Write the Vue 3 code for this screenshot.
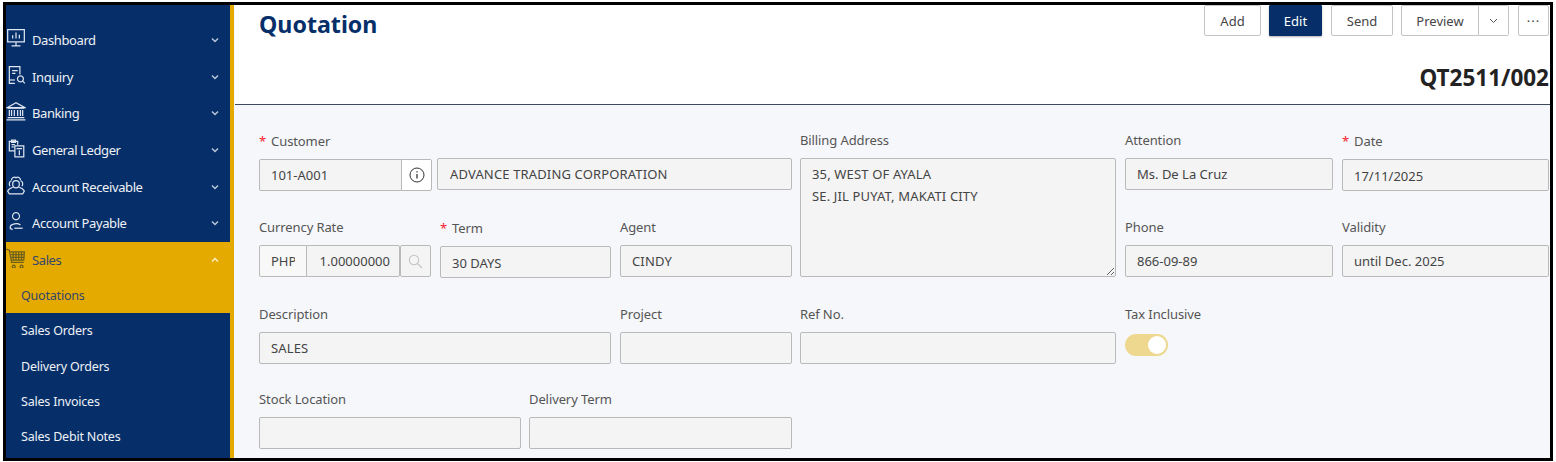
<script setup>
const menu = [
  { label: 'Dashboard', icon: ['M1.500 1.500h15v11h-15z', 'M6 9.500V6.500M9 9.500V4M12 9.500V6', 'M9 12.500v3M5 16h8'] },
  { label: 'Inquiry', icon: ['M12.500 8.500V1.500H3v15h5', 'M5.500 5h5M5.500 7.500h3', 'M13 9.800a2.700 2.700 0 1 0 .01 0z', 'M15 14.500l2 2', 'M3.500 13.500H8'] },
  { label: 'Banking', icon: ['M1 6L9 1.500 17 6z', 'M1.500 6.500h15M1.500 15h15M.5 17h17', 'M3 8v5.500M5 8v5.500M7.500 8v5.500M10.500 8v5.500M13 8v5.500M15 8v5.500'] },
  { label: 'General Ledger', icon: ['M8 11.500H3V3h7.500v3', 'M5 2h3.500v2H5z', 'M8 7h8v10H8z', 'M9.500 9.500h5M12 11v4.500M5 6h3M5 8h2'] },
  { label: 'Account Receivable', icon: ['M6 8a3 3 0 0 1 6 0c0 2-1 3.500-3 3.500S6 10 6 8z', 'M5 4.500a2.500 2.500 0 0 1 4-2 2.500 2.500 0 0 1 4 2', 'M6 11l-3 1.500-1.500 2L3 17h12l1.500-2.500-1.500-2L12 11', 'M5 5C3 5.500 2.500 8 3.500 10M13 5c2 .5 2.500 3 1.500 5'] },
  { label: 'Account Payable', icon: ['M9 1.500a3.200 3.200 0 1 0 .01 0z', 'M6 16.500C3 16.500 3 13 6 12c2.500-1 5-1 7 .5', 'M7.500 15.500h7.500'] },
  { label: 'Sales', active: true, open: true, icon: ['M0 1l3 1 2 11h11', 'M3.500 3.500h13L16 11H5', 'M6.500 3.500V11M9 3.500V11M11.500 3.500V11M14 3.500V11M4 6h12.500M4.500 8.500h12', 'M7 15.500a1.300 1.300 0 1 0 .01 0zM14 15.500a1.300 1.300 0 1 0 .01 0z'] }
]
const subItems = ['Quotations', 'Sales Orders', 'Delivery Orders', 'Sales Invoices', 'Sales Debit Notes']
</script>

<template>
  <div class="frame">
    <aside class="sidebar">
      <nav class="menu">
        <div v-for="item in menu" :key="item.label" class="menu-item" :class="{ active: item.active }">
          <svg class="menu-icon" viewBox="0 0 18 18" fill="none" stroke="currentColor" stroke-width="1.100">
            <path v-for="d in item.icon" :key="d" :d="d" />
          </svg>
          <span class="menu-label">{{ item.label }}</span>
          <svg class="chevron" viewBox="0 0 8 6" fill="none" stroke="currentColor" stroke-width="1.500">
            <path :d="item.open ? 'M1 4.500L4 1.500 7 4.500' : 'M1 1.500L4 4.500 7 1.500'" />
          </svg>
        </div>
        <div
          v-for="(sub, i) in subItems"
          :key="sub"
          class="sub-item"
          :class="{ active: i === 0 }"
        >{{ sub }}</div>
      </nav>
    </aside>

    <main class="main">
      <header class="head">
        <div class="head-top">
          <h1 class="title">Quotation</h1>
          <div class="actions">
            <button class="btn btn-add">Add</button>
            <button class="btn btn-edit">Edit</button>
            <button class="btn btn-send">Send</button>
            <div class="split">
              <button class="btn btn-preview">Preview</button>
              <button class="btn btn-caret">
                <svg width="9" height="6" viewBox="0 0 9 6" fill="none" stroke="#555" stroke-width="1"><path d="M1 1l3.500 3.500L8 1" /></svg>
              </button>
            </div>
            <button class="btn btn-more">···</button>
          </div>
        </div>
        <div class="doc-no">QT2511/002</div>
      </header>

      <section class="form">
        <div class="field f-customer req">
          <label class="lbl"><span class="star">*</span>Customer</label>
          <div class="customer-row">
            <div class="joined">
              <input class="inp code" readonly value="101-A001" />
              <button class="addon info">
                <svg width="16" height="16" viewBox="0 0 16 16" fill="none" stroke="#333" stroke-width="1"><circle cx="8" cy="8" r="7" /><path d="M8 7v4.500" stroke-width="1.300" /><path d="M8 4.200v1.300" stroke-width="1.300" /></svg>
              </button>
            </div>
            <input class="inp name caps" readonly value="ADVANCE TRADING CORPORATION" />
          </div>
        </div>

        <div class="field f-address f-billing">
          <label class="lbl">Billing Address</label>
          <textarea class="inp area caps" readonly>35, WEST OF AYALA
SE. JIL PUYAT, MAKATI CITY</textarea>
        </div>

        <div class="field f-c6">
          <label class="lbl">Attention</label>
          <input class="inp" readonly value="Ms. De La Cruz" />
        </div>

        <div class="field f-c7 req">
          <label class="lbl"><span class="star">*</span>Date</label>
          <input class="inp low" readonly value="17/11/2025" />
        </div>

        <div class="field f-currency">
          <label class="lbl">Currency Rate</label>
          <div class="joined">
            <input class="inp cur" readonly value="PHP" />
            <input class="inp rate" readonly value="1.00000000" />
            <button class="addon search">
              <svg width="15" height="15" viewBox="0 0 15 15" fill="none" stroke="#c4c4c4" stroke-width="1.100"><circle cx="6" cy="6" r="4.700" /><path d="M9.500 9.500l4.500 4.500" /></svg>
            </button>
          </div>
        </div>

        <div class="field f-term req">
          <label class="lbl"><span class="star">*</span>Term</label>
          <input class="inp low" readonly value="30 DAYS" />
        </div>

        <div class="field f-c4">
          <label class="lbl">Agent</label>
          <input class="inp caps" readonly value="CINDY" />
        </div>

        <div class="field f-c6">
          <label class="lbl">Phone</label>
          <input class="inp" readonly value="866-09-89" />
        </div>

        <div class="field f-c7">
          <label class="lbl">Validity</label>
          <input class="inp" readonly value="until Dec. 2025" />
        </div>

        <div class="field f-desc">
          <label class="lbl">Description</label>
          <input class="inp caps" readonly value="SALES" />
        </div>

        <div class="field f-c4">
          <label class="lbl">Project</label>
          <input class="inp" readonly />
        </div>

        <div class="field f-address">
          <label class="lbl">Ref No.</label>
          <input class="inp" readonly />
        </div>

        <div class="field f-c6">
          <label class="lbl">Tax Inclusive</label>
          <div class="toggle"><span class="knob"></span></div>
        </div>

        <div class="field f-stock">
          <label class="lbl">Stock Location</label>
          <input class="inp" readonly />
        </div>

        <div class="field f-delivery">
          <label class="lbl">Delivery Term</label>
          <input class="inp" readonly />
        </div>
      </section>
    </main>
  </div>
</template>

<style>
html, body { margin: 0; background: #fff; }
</style>

<style scoped>
.frame {
  box-sizing: border-box;
  width: 1550px;
  height: 459px;
  margin: 2px 0 0 3px;
  border: 3px solid #000;
  display: flex;
  overflow: hidden;
  font-family: "Noto Sans", "Open Sans", sans-serif;
  font-size: 13px;
  background: #f5f7fb;
}
.sidebar {
  box-sizing: border-box;
  flex: 0 0 228px;
  background: #062f69;
  border-right: 4px solid #e5aa00;
  margin-right: 1px;
  padding-top: 17px;
  color: #eef1f6;
}
.menu-item {
  height: 36.6px;
  display: flex;
  align-items: center;
  padding: 0 11px 0 0;
  letter-spacing: -0.4px;
}
.menu-item.active, .sub-item.active { background: #e5aa00; color: #36466a; }
.menu-icon { width: 20px; height: 20px; flex: none; color: #dfe6f0; margin-top: -4px; }
.menu-item.active .menu-icon { color: #6d5f1c; }
.menu-label { margin-left: 6px; flex: 1; }
.chevron { width: 8px; height: 6px; color: #b9c6d8; flex: none; }
.menu-item.active .chevron { color: #fbeec2; }
.sub-item {
  height: 35.3px;
  line-height: 35.3px;
  padding-left: 15px;
  font-size: 12.500px;
  letter-spacing: -0.2px;
}
.main { flex: 1; min-width: 0; }
.head {
  box-sizing: border-box;
  height: 100px;
  background: #fff;
  border-bottom: 1px solid #3d4a5e;
  padding-left: 24px;
  padding-right: 1px;
}
.head-top { display: flex; justify-content: space-between; align-items: flex-start; }
.title {
  margin: 0;
  font-size: 23.200px;
  line-height: 38px;
  font-weight: 700;
  color: #062f69;
}
.actions { display: flex; gap: 8px; }
.btn {
  box-sizing: border-box;
  height: 31px;
  padding: 0;
  border: 1px solid #c4c4c4;
  border-radius: 2px;
  background: #fff;
  color: #444;
  font: inherit;
  display: flex;
  align-items: center;
  justify-content: center;
}
.btn-add { width: 57px; }
.btn-edit { width: 53px; background: #062f69; border-color: #062f69; color: #fff; border-radius: 1px; box-shadow: 0 1px 2px rgba(0,0,0,.3); }
.btn-send { width: 62px; margin-left: 1px; }
.split { display: flex; }
.btn-preview { width: 78px; border-radius: 2px 0 0 2px; }
.btn-caret { width: 30px; border-left: 0; border-radius: 0 2px 2px 0; }
.btn-more { width: 31px; margin-left: 1px; letter-spacing: 1px; }
.doc-no {
  margin-top: 21px;
  text-align: right;
  font-size: 22.500px;
  line-height: 28px;
  font-weight: 700;
  color: #222;
}
.form {
  display: grid;
  grid-template-columns: 172px 81px 81px 172px 315px 208px 207px;
  grid-template-rows: 87px 87px 85px auto;
  column-gap: 9px;
  padding: 25px 1px 0 24px;
}
.field { display: flex; flex-direction: column; min-width: 0; }
.req { padding-top: 1px; }
.lbl { height: 20px; line-height: 20px; margin-bottom: 8px; color: #555; letter-spacing: -0.1px; }
.star { color: #f5222d; margin-right: 5px; }
.inp {
  box-sizing: border-box;
  width: 100%;
  height: 32px;
  padding: 0 11px;
  border: 1px solid #b9b9b9;
  border-radius: 2px;
  background: #f4f4f4;
  color: #444;
  font: inherit;
  outline: none;
}
.caps { letter-spacing: 0.15px; }
.low { padding-top: 2px; }
.f-customer { grid-column: 1 / 5; }
.f-address { grid-column: 5; margin-left: -1px; }
.f-billing { grid-row: 1 / 3; }
.f-c6 { grid-column: 6; }
.f-c7 { grid-column: 7; }
.f-currency { grid-column: 1; }
.f-term { grid-column: 2 / 4; }
.f-c4 { grid-column: 4; }
.f-desc { grid-column: 1 / 4; }
.f-stock { grid-column: 1 / 3; }
.f-delivery { grid-column: 3 / 5; margin-left: -1px; }
.customer-row { display: flex; gap: 5px; align-items: flex-start; }
.joined { display: flex; flex: none; }
.name { flex: 1; min-width: 0; margin-top: -1px; padding-left: 12px; }
.code { width: 143px; border-radius: 2px 0 0 2px; }
.cur { width: 48px; background: #f8f8f8; border-radius: 2px 0 0 2px; }
.rate { width: 94px; margin-left: -1px; text-align: right; padding: 0 9px; }
.addon {
  box-sizing: border-box;
  height: 32px;
  padding: 0;
  border: 1px solid #b9b9b9;
  border-radius: 0 2px 2px 0;
  display: flex;
  align-items: center;
  justify-content: center;
}
.info { width: 31px; margin-left: -1px; background: #fff; }
.search { width: 31px; background: #f4f4f4; border-radius: 2px; }
.area {
  height: 119px;
  padding: 4px 11px;
  line-height: 22px;
  resize: vertical;
  display: block;
}
.toggle {
  box-sizing: border-box;
  width: 43px;
  height: 22px;
  margin-top: 2px;
  border-radius: 11px;
  background: #eed88f;
  padding: 2px;
  display: flex;
  justify-content: flex-end;
}
.knob { width: 18px; height: 18px; border-radius: 50%; background: #fff; }
</style>
